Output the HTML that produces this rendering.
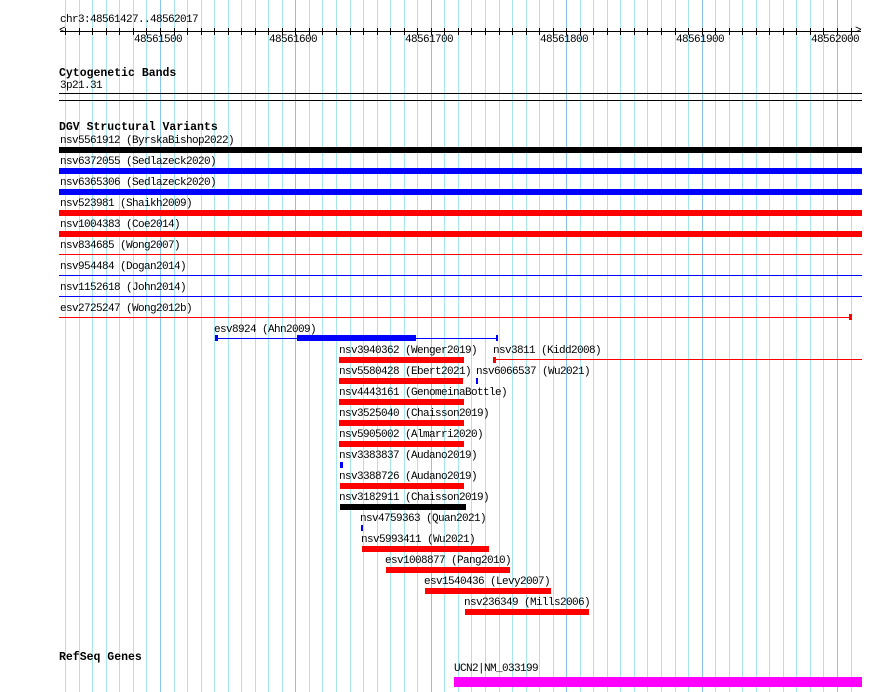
<!DOCTYPE html>
<html><head><meta charset="utf-8"><style>
html,body{margin:0;padding:0;background:#fff;}
body{width:890px;height:692px;position:relative;overflow:hidden;font-family:"Liberation Mono","DejaVu Sans Mono",monospace;font-size:11px;letter-spacing:-0.6px;color:#000;}
.a{position:absolute;}
.t{position:absolute;white-space:pre;line-height:11px;}
.b{font-weight:bold;font-size:11.5px;letter-spacing:0;}
.g{position:absolute;top:0;width:1px;height:692px;background:#a8e6ee;}
.dk{position:absolute;top:0;width:1px;height:692px;background:#88c4ec;}
.tk{position:absolute;top:28px;width:1px;height:7px;background:#000;}
.r{background:#f00;}.bl{background:#00f;}.k{background:#000;}
</style></head><body>
<div class="g" style="left:65px"></div><div class="g" style="left:79px"></div><div class="g" style="left:92px"></div><div class="g" style="left:106px"></div><div class="g" style="left:119px"></div><div class="g" style="left:133px"></div><div class="g" style="left:146px"></div>
<div class="g" style="left:174px"></div><div class="g" style="left:187px"></div><div class="g" style="left:201px"></div><div class="g" style="left:214px"></div><div class="g" style="left:228px"></div><div class="g" style="left:241px"></div><div class="g" style="left:255px"></div><div class="g" style="left:268px"></div><div class="g" style="left:282px"></div>
<div class="g" style="left:309px"></div><div class="g" style="left:322px"></div><div class="g" style="left:336px"></div><div class="g" style="left:350px"></div><div class="g" style="left:363px"></div><div class="g" style="left:377px"></div><div class="g" style="left:390px"></div><div class="g" style="left:404px"></div><div class="g" style="left:417px"></div>
<div class="g" style="left:444px"></div><div class="g" style="left:458px"></div><div class="g" style="left:471px"></div><div class="g" style="left:485px"></div><div class="g" style="left:499px"></div><div class="g" style="left:512px"></div><div class="g" style="left:526px"></div><div class="g" style="left:539px"></div><div class="g" style="left:553px"></div>
<div class="g" style="left:580px"></div><div class="g" style="left:593px"></div><div class="g" style="left:607px"></div><div class="g" style="left:620px"></div><div class="g" style="left:634px"></div><div class="g" style="left:647px"></div><div class="g" style="left:661px"></div><div class="g" style="left:675px"></div><div class="g" style="left:688px"></div>
<div class="g" style="left:715px"></div><div class="g" style="left:729px"></div><div class="g" style="left:742px"></div><div class="g" style="left:756px"></div><div class="g" style="left:769px"></div><div class="g" style="left:783px"></div><div class="g" style="left:796px"></div><div class="g" style="left:810px"></div><div class="g" style="left:823px"></div><div class="g" style="left:851px"></div>
<div class="dk" style="left:160px"></div><div class="dk" style="left:295px"></div><div class="dk" style="left:431px"></div><div class="dk" style="left:566px"></div><div class="dk" style="left:702px"></div><div class="dk" style="left:837px"></div>

<div class="t" style="left:60px;top:15px">chr3:48561427..48562017</div>
<div class="a k" style="left:60px;top:31px;width:801px;height:1px"></div>
<div class="tk" style="left:65px"></div><div class="tk" style="left:79px"></div><div class="tk" style="left:92px"></div><div class="tk" style="left:106px"></div><div class="tk" style="left:119px"></div><div class="tk" style="left:133px"></div><div class="tk" style="left:146px"></div><div class="tk" style="left:160px"></div>
<div class="tk" style="left:174px"></div><div class="tk" style="left:187px"></div><div class="tk" style="left:201px"></div><div class="tk" style="left:214px"></div><div class="tk" style="left:228px"></div><div class="tk" style="left:241px"></div><div class="tk" style="left:255px"></div><div class="tk" style="left:268px"></div><div class="tk" style="left:282px"></div><div class="tk" style="left:295px"></div>
<div class="tk" style="left:309px"></div><div class="tk" style="left:322px"></div><div class="tk" style="left:336px"></div><div class="tk" style="left:350px"></div><div class="tk" style="left:363px"></div><div class="tk" style="left:377px"></div><div class="tk" style="left:390px"></div><div class="tk" style="left:404px"></div><div class="tk" style="left:417px"></div><div class="tk" style="left:431px"></div>
<div class="tk" style="left:444px"></div><div class="tk" style="left:458px"></div><div class="tk" style="left:471px"></div><div class="tk" style="left:485px"></div><div class="tk" style="left:499px"></div><div class="tk" style="left:512px"></div><div class="tk" style="left:526px"></div><div class="tk" style="left:539px"></div><div class="tk" style="left:553px"></div><div class="tk" style="left:566px"></div>
<div class="tk" style="left:580px"></div><div class="tk" style="left:593px"></div><div class="tk" style="left:607px"></div><div class="tk" style="left:620px"></div><div class="tk" style="left:634px"></div><div class="tk" style="left:647px"></div><div class="tk" style="left:661px"></div><div class="tk" style="left:675px"></div><div class="tk" style="left:688px"></div><div class="tk" style="left:702px"></div>
<div class="tk" style="left:715px"></div><div class="tk" style="left:729px"></div><div class="tk" style="left:742px"></div><div class="tk" style="left:756px"></div><div class="tk" style="left:769px"></div><div class="tk" style="left:783px"></div><div class="tk" style="left:796px"></div><div class="tk" style="left:810px"></div><div class="tk" style="left:823px"></div><div class="tk" style="left:837px"></div><div class="tk" style="left:851px"></div>
<div class="t" style="left:59px;top:26px">&lt;</div>
<div class="t" style="left:855px;top:26px">&gt;</div>
<div class="t" style="left:134px;top:35px">48561500</div>
<div class="t" style="left:269px;top:35px">48561600</div>
<div class="t" style="left:405px;top:35px">48561700</div>
<div class="t" style="left:540px;top:35px">48561800</div>
<div class="t" style="left:676px;top:35px">48561900</div>
<div class="t" style="left:811px;top:35px">48562000</div>

<div class="t b" style="left:59px;top:68px">Cytogenetic Bands</div>
<div class="t" style="left:60px;top:81px">3p21.31</div>
<div class="a k" style="left:59px;top:93px;width:803px;height:1px"></div>
<div class="a k" style="left:59px;top:100px;width:803px;height:1px"></div>

<div class="t b" style="left:59px;top:122px">DGV Structural Variants</div>
<div class="t" style="left:60px;top:136px">nsv5561912 (ByrskaBishop2022)</div>
<div class="a k" style="left:59px;top:147px;width:803px;height:6px"></div>
<div class="t" style="left:60px;top:157px">nsv6372055 (Sedlazeck2020)</div>
<div class="a bl" style="left:59px;top:168px;width:803px;height:6px"></div>
<div class="t" style="left:60px;top:178px">nsv6365306 (Sedlazeck2020)</div>
<div class="a bl" style="left:59px;top:189px;width:803px;height:6px"></div>
<div class="t" style="left:60px;top:199px">nsv523981 (Shaikh2009)</div>
<div class="a r" style="left:59px;top:210px;width:803px;height:6px"></div>
<div class="t" style="left:60px;top:220px">nsv1004383 (Coe2014)</div>
<div class="a r" style="left:59px;top:231px;width:803px;height:6px"></div>
<div class="t" style="left:60px;top:241px">nsv834685 (Wong2007)</div>
<div class="a r" style="left:59px;top:254px;width:803px;height:1px"></div>
<div class="t" style="left:60px;top:262px">nsv954484 (Dogan2014)</div>
<div class="a bl" style="left:59px;top:275px;width:803px;height:1px"></div>
<div class="t" style="left:60px;top:283px">nsv1152618 (John2014)</div>
<div class="a bl" style="left:59px;top:296px;width:803px;height:1px"></div>
<div class="t" style="left:60px;top:304px">esv2725247 (Wong2012b)</div>
<div class="a r" style="left:59px;top:317px;width:792px;height:1px"></div>
<div class="a r" style="left:849px;top:314px;width:3px;height:6px"></div>

<div class="t" style="left:214px;top:325px">esv8924 (Ahn2009)</div>
<div class="a bl" style="left:215px;top:338px;width:283px;height:1px"></div>
<div class="a bl" style="left:215px;top:335px;width:3px;height:6px"></div>
<div class="a bl" style="left:297px;top:335px;width:119px;height:6px"></div>
<div class="a bl" style="left:496px;top:335px;width:2px;height:6px"></div>

<div class="t" style="left:339px;top:346px">nsv3940362 (Wenger2019)</div>
<div class="a r" style="left:339px;top:357px;width:125px;height:6px"></div>
<div class="t" style="left:493px;top:346px">nsv3811 (Kidd2008)</div>
<div class="a r" style="left:493px;top:357px;width:3px;height:6px"></div>
<div class="a r" style="left:496px;top:359px;width:366px;height:1px"></div>

<div class="t" style="left:339px;top:367px">nsv5580428 (Ebert2021)</div>
<div class="a r" style="left:339px;top:378px;width:124px;height:6px"></div>
<div class="t" style="left:476px;top:367px">nsv6066537 (Wu2021)</div>
<div class="a bl" style="left:476px;top:378px;width:2px;height:6px"></div>

<div class="t" style="left:339px;top:388px">nsv4443161 (GenomeinaBottle)</div>
<div class="a r" style="left:339px;top:399px;width:125px;height:6px"></div>
<div class="t" style="left:339px;top:409px">nsv3525040 (Chaisson2019)</div>
<div class="a r" style="left:339px;top:420px;width:125px;height:6px"></div>
<div class="t" style="left:339px;top:430px">nsv5905002 (Almarri2020)</div>
<div class="a r" style="left:339px;top:441px;width:125px;height:6px"></div>
<div class="t" style="left:339px;top:451px">nsv3383837 (Audano2019)</div>
<div class="a bl" style="left:340px;top:462px;width:3px;height:6px"></div>
<div class="t" style="left:339px;top:472px">nsv3388726 (Audano2019)</div>
<div class="a r" style="left:340px;top:483px;width:124px;height:6px"></div>
<div class="t" style="left:339px;top:493px">nsv3182911 (Chaisson2019)</div>
<div class="a k" style="left:340px;top:504px;width:126px;height:6px"></div>
<div class="t" style="left:360px;top:514px">nsv4759363 (Quan2021)</div>
<div class="a bl" style="left:361px;top:525px;width:2px;height:6px"></div>
<div class="t" style="left:361px;top:535px">nsv5993411 (Wu2021)</div>
<div class="a r" style="left:362px;top:546px;width:127px;height:6px"></div>
<div class="t" style="left:385px;top:556px">esv1008877 (Pang2010)</div>
<div class="a r" style="left:386px;top:567px;width:124px;height:6px"></div>
<div class="t" style="left:424px;top:577px">esv1540436 (Levy2007)</div>
<div class="a r" style="left:425px;top:588px;width:126px;height:6px"></div>
<div class="t" style="left:464px;top:598px">nsv236349 (Mills2006)</div>
<div class="a r" style="left:465px;top:609px;width:124px;height:6px"></div>

<div class="t b" style="left:59px;top:652px">RefSeq Genes</div>
<div class="t" style="left:454px;top:664px">UCN2|NM_033199</div>
<div class="a" style="left:454px;top:677px;width:408px;height:10px;background:#f0f"></div>
</body></html>
